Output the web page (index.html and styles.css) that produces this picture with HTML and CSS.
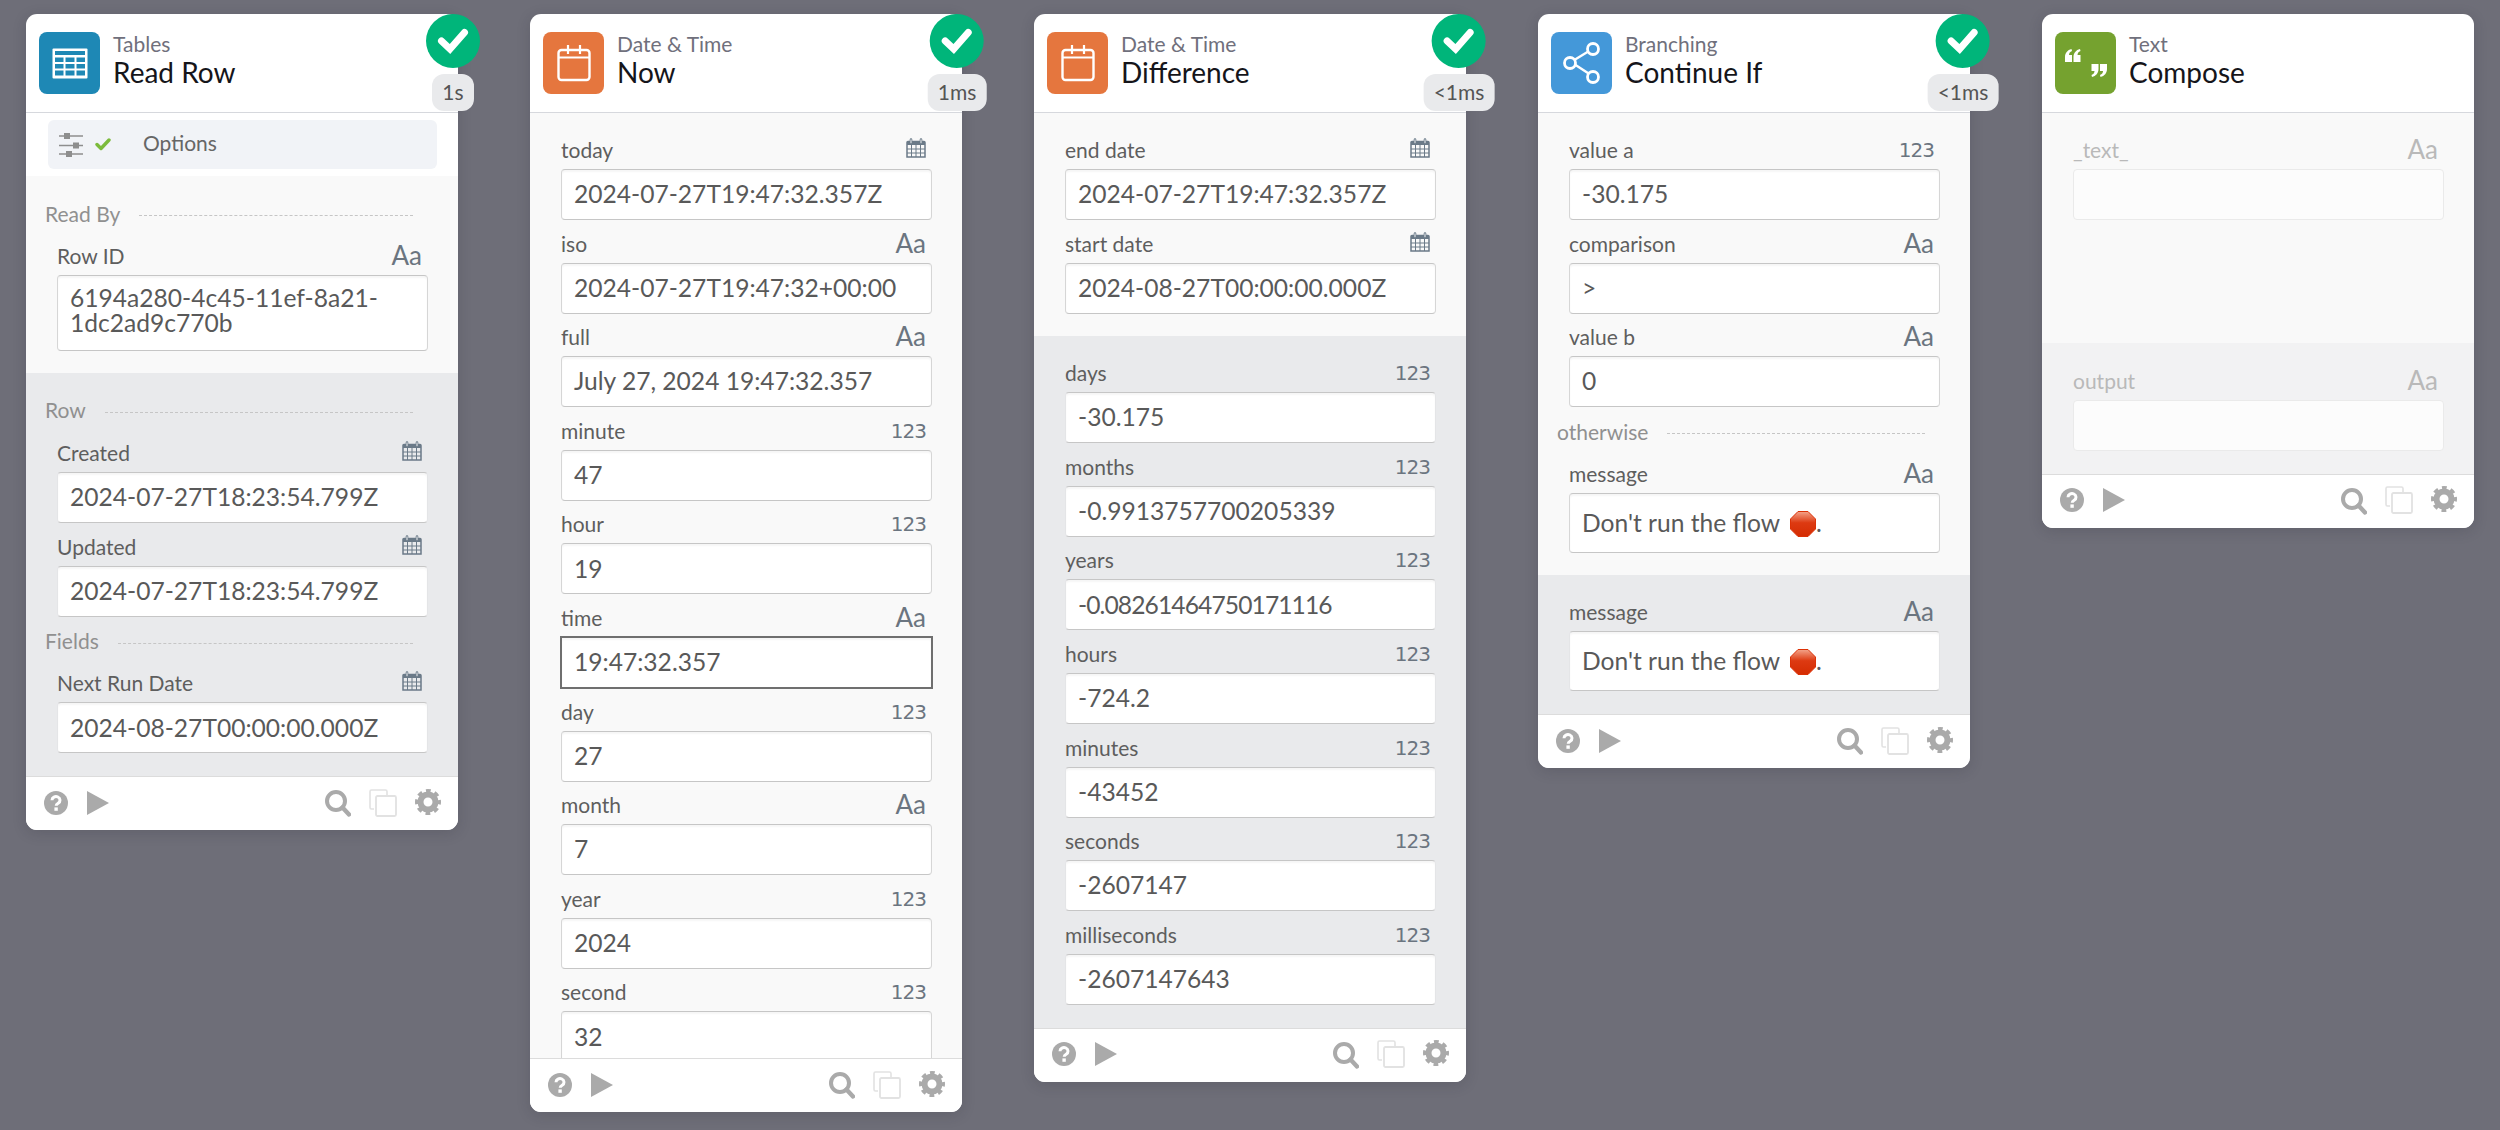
FILE: index.html
```html
<!DOCTYPE html>
<html lang="en">
<head>
<meta charset="utf-8">
<title>Flow run</title>
<link rel="stylesheet" href="styles.css">
</head>
<body>
<svg class="defs" width="0" height="0" aria-hidden="true">
  <symbol id="cal" viewBox="0 0 20 20">
    <path d="M1 4.5a1 1 0 0 1 1-1h16a1 1 0 0 1 1 1V19H1z" fill="none" stroke="currentColor" stroke-width="1.5"/>
    <path d="M1 3.5h18V7H1z" fill="currentColor"/>
    <path d="M5 1.5v4M15 1.5v4" stroke="currentColor" stroke-width="2.6" stroke-linecap="round"/>
    <path d="M5 1.8v3M15 1.8v3" stroke="#fff" stroke-width=".9" stroke-linecap="round"/>
    <path d="M1 11h18M1 15h18M5.5 7v12M10 7v12M14.5 7v12" stroke="currentColor" stroke-width="1"/>
  </symbol>
  <symbol id="help" viewBox="0 0 24 24">
    <circle cx="12" cy="12" r="12" fill="currentColor"/>
    <path d="M8 9.2a4 3.6 0 1 1 6.2 3c-1.3.8-2 1.2-2 2.6" fill="none" stroke="#fff" stroke-width="3"/>
    <rect x="10.4" y="16.4" width="3.4" height="3.4" fill="#fff"/>
  </symbol>
  <symbol id="play" viewBox="0 0 22 24"><path d="M0 0l22 12L0 24z" fill="currentColor"/></symbol>
  <symbol id="search" viewBox="0 0 26 27">
    <circle cx="11" cy="11" r="9" fill="none" stroke="currentColor" stroke-width="4"/>
    <path d="M17.5 17.5l6.5 7" stroke="currentColor" stroke-width="4.4" stroke-linecap="round"/>
  </symbol>
  <symbol id="copy" viewBox="0 0 28 28">
    <path d="M5 20H2.5A1.5 1.5 0 0 1 1 18.500V2.500A1.500 1.500 0 0 1 2.500 1h14A1.500 1.500 0 0 1 18 2.500V6" fill="none" stroke="currentColor" stroke-width="1.6"/>
    <rect x="7" y="7" width="20" height="20" rx="1.500" fill="none" stroke="currentColor" stroke-width="1.800"/>
  </symbol>
  <symbol id="gear" viewBox="0 0 26 26">
    <circle cx="13" cy="13" r="7.500" fill="none" stroke="currentColor" stroke-width="6"/>
    <circle cx="13" cy="13" r="11" fill="none" stroke="currentColor" stroke-width="4" stroke-dasharray="4.640 3.999" stroke-dashoffset="2.320"/>
  </symbol>
  <symbol id="check" viewBox="0 0 54 54">
    <path d="M15.500 27l8.500 8L38.500 18.500" fill="none" stroke="#fff" stroke-width="7" stroke-linecap="round" stroke-linejoin="miter"/>
  </symbol>
  <symbol id="stop" viewBox="0 0 26 26">
    <defs><linearGradient id="stopfill" x1="0" y1="0" x2="0" y2="1"><stop offset="0" stop-color="#f3a48a"/><stop offset=".45" stop-color="#dd3a12"/><stop offset="1" stop-color="#d42c02"/></linearGradient></defs>
    <path d="M8 .5h10L25.500 8v10L18 25.500H8L.5 18V8z" fill="url(#stopfill)" stroke="#dc3106"/>
  </symbol>
</svg>

<main class="board">

  <article class="card">
    <header class="card-head">
      <div class="app-icon app-tables">
        <svg width="36" height="31" viewBox="0 0 36 31"><rect x=".5" y=".5" width="35" height="30" rx="1" fill="#fff"/><g fill="#1e88b5"><rect x="3" y="3" width="30" height="4"/><rect x="3" y="9.500" width="8.500" height="4.500"/><rect x="13.500" y="9.500" width="9" height="4.500"/><rect x="24.500" y="9.500" width="8.500" height="4.500"/><rect x="3" y="16" width="8.500" height="4.500"/><rect x="13.500" y="16" width="9" height="4.500"/><rect x="24.500" y="16" width="8.500" height="4.500"/><rect x="3" y="22.500" width="8.500" height="5"/><rect x="13.500" y="22.500" width="9" height="5"/><rect x="24.500" y="22.500" width="8.500" height="5"/></g></svg>
      </div>
      <div class="head-text"><div class="app-name">Tables</div><div class="step-name">Read Row</div></div>
    </header>
    <div class="status"><span class="status-dot"><svg width="54" height="54"><use href="#check"/></svg></span><span class="status-time">1s</span></div>
    <div class="options-wrap">
      <div class="options">
        <svg class="options-sliders" width="26" height="24" viewBox="0 0 26 24"><g stroke="#8e8e8e" stroke-width="1.600"><path d="M1 3h24M1 12.500h24M1 21h24"/></g><g fill="#8e8e8e"><rect x="6" y="0" width="6" height="6"/><rect x="15" y="9.500" width="6" height="6"/><rect x="8" y="18" width="6" height="6"/></g></svg>
        <svg class="options-check" width="16" height="13" viewBox="0 0 16 13"><path d="M2 6.500l4 4 8-8.500" fill="none" stroke="#7cbb3c" stroke-width="3.400" stroke-linecap="round" stroke-linejoin="round"/></svg>
        <span class="options-label">Options</span>
      </div>
    </div>
    <section class="section section-light section-titled">
      <div class="section-title"><span>Read By</span><i class="rule"></i></div>
      <div class="field"><div class="field-head"><span class="field-label">Row ID</span><span class="type-aa">Aa</span></div><div class="input input-multi">6194a280-4c45-11ef-8a21-<br>1dc2ad9c770b</div></div>
    </section>
    <section class="section section-grey section-titled">
      <div class="section-title title-row"><span>Row</span><i class="rule"></i></div>
      <div class="field"><div class="field-head"><span class="field-label">Created</span><svg class="type-cal"><use href="#cal"/></svg></div><div class="input">2024-07-27T18:23:54.799Z</div></div>
      <div class="field"><div class="field-head"><span class="field-label">Updated</span><svg class="type-cal"><use href="#cal"/></svg></div><div class="input">2024-07-27T18:23:54.799Z</div></div>
      <div class="section-title title-inner"><span>Fields</span><i class="rule"></i></div>
      <div class="field"><div class="field-head"><span class="field-label">Next Run Date</span><svg class="type-cal"><use href="#cal"/></svg></div><div class="input">2024-08-27T00:00:00.000Z</div></div>
    </section>
    <footer class="card-foot">
      <svg class="foot-ico ico-help"><use href="#help"/></svg><svg class="foot-ico ico-play"><use href="#play"/></svg>
      <svg class="foot-ico ico-search"><use href="#search"/></svg><svg class="foot-ico ico-copy"><use href="#copy"/></svg><svg class="foot-ico ico-gear"><use href="#gear"/></svg>
    </footer>
  </article>

  <article class="card">
    <header class="card-head">
      <div class="app-icon app-date">
        <svg width="34" height="38" viewBox="0 0 34 38"><rect x="1.500" y="6" width="31" height="30" rx="3" fill="none" stroke="#fff" stroke-width="2.400"/><path d="M1.500 13.500h31M11 1v9M23 1v9" stroke="#fff" stroke-width="2.200"/></svg>
      </div>
      <div class="head-text"><div class="app-name">Date &amp; Time</div><div class="step-name">Now</div></div>
    </header>
    <div class="status"><span class="status-dot"><svg width="54" height="54"><use href="#check"/></svg></span><span class="status-time">1ms</span></div>
    <section class="section section-light section-scroll">
      <div class="field"><div class="field-head"><span class="field-label">today</span><svg class="type-cal"><use href="#cal"/></svg></div><div class="input">2024-07-27T19:47:32.357Z</div></div>
      <div class="field"><div class="field-head"><span class="field-label">iso</span><span class="type-aa">Aa</span></div><div class="input">2024-07-27T19:47:32+00:00</div></div>
      <div class="field"><div class="field-head"><span class="field-label">full</span><span class="type-aa">Aa</span></div><div class="input">July 27, 2024 19:47:32.357</div></div>
      <div class="field"><div class="field-head"><span class="field-label">minute</span><span class="type-num">123</span></div><div class="input">47</div></div>
      <div class="field"><div class="field-head"><span class="field-label">hour</span><span class="type-num">123</span></div><div class="input">19</div></div>
      <div class="field"><div class="field-head"><span class="field-label">time</span><span class="type-aa">Aa</span></div><div class="input input-focus">19:47:32.357</div></div>
      <div class="field"><div class="field-head"><span class="field-label">day</span><span class="type-num">123</span></div><div class="input">27</div></div>
      <div class="field"><div class="field-head"><span class="field-label">month</span><span class="type-aa">Aa</span></div><div class="input">7</div></div>
      <div class="field"><div class="field-head"><span class="field-label">year</span><span class="type-num">123</span></div><div class="input">2024</div></div>
      <div class="field"><div class="field-head"><span class="field-label">second</span><span class="type-num">123</span></div><div class="input">32</div></div>
    </section>
    <footer class="card-foot">
      <svg class="foot-ico ico-help"><use href="#help"/></svg><svg class="foot-ico ico-play"><use href="#play"/></svg>
      <svg class="foot-ico ico-search"><use href="#search"/></svg><svg class="foot-ico ico-copy"><use href="#copy"/></svg><svg class="foot-ico ico-gear"><use href="#gear"/></svg>
    </footer>
  </article>

  <article class="card">
    <header class="card-head">
      <div class="app-icon app-date">
        <svg width="34" height="38" viewBox="0 0 34 38"><rect x="1.500" y="6" width="31" height="30" rx="3" fill="none" stroke="#fff" stroke-width="2.400"/><path d="M1.500 13.500h31M11 1v9M23 1v9" stroke="#fff" stroke-width="2.200"/></svg>
      </div>
      <div class="head-text"><div class="app-name">Date &amp; Time</div><div class="step-name">Difference</div></div>
    </header>
    <div class="status status-wide"><span class="status-dot"><svg width="54" height="54"><use href="#check"/></svg></span><span class="status-time">&lt;1ms</span></div>
    <section class="section section-light">
      <div class="field"><div class="field-head"><span class="field-label">end date</span><svg class="type-cal"><use href="#cal"/></svg></div><div class="input">2024-07-27T19:47:32.357Z</div></div>
      <div class="field"><div class="field-head"><span class="field-label">start date</span><svg class="type-cal"><use href="#cal"/></svg></div><div class="input">2024-08-27T00:00:00.000Z</div></div>
    </section>
    <section class="section section-grey">
      <div class="field"><div class="field-head"><span class="field-label">days</span><span class="type-num">123</span></div><div class="input">-30.175</div></div>
      <div class="field"><div class="field-head"><span class="field-label">months</span><span class="type-num">123</span></div><div class="input">-0.9913757700205339</div></div>
      <div class="field"><div class="field-head"><span class="field-label">years</span><span class="type-num">123</span></div><div class="input input-ones">-0.08261464750171116</div></div>
      <div class="field"><div class="field-head"><span class="field-label">hours</span><span class="type-num">123</span></div><div class="input">-724.2</div></div>
      <div class="field"><div class="field-head"><span class="field-label">minutes</span><span class="type-num">123</span></div><div class="input">-43452</div></div>
      <div class="field"><div class="field-head"><span class="field-label">seconds</span><span class="type-num">123</span></div><div class="input">-2607147</div></div>
      <div class="field"><div class="field-head"><span class="field-label">milliseconds</span><span class="type-num">123</span></div><div class="input">-2607147643</div></div>
    </section>
    <footer class="card-foot">
      <svg class="foot-ico ico-help"><use href="#help"/></svg><svg class="foot-ico ico-play"><use href="#play"/></svg>
      <svg class="foot-ico ico-search"><use href="#search"/></svg><svg class="foot-ico ico-copy"><use href="#copy"/></svg><svg class="foot-ico ico-gear"><use href="#gear"/></svg>
    </footer>
  </article>

  <article class="card">
    <header class="card-head">
      <div class="app-icon app-branch">
        <svg width="38" height="44" viewBox="0 0 38 44"><path d="M31 7L8 21l23 15" fill="none" stroke="#fff" stroke-width="2.400"/><g fill="#4498d9" stroke="#fff" stroke-width="2.800"><circle cx="30" cy="8" r="5.500"/><circle cx="7" cy="22" r="5.500"/><circle cx="30" cy="36" r="5.500"/></g></svg>
      </div>
      <div class="head-text"><div class="app-name">Branching</div><div class="step-name">Continue If</div></div>
    </header>
    <div class="status status-wide"><span class="status-dot"><svg width="54" height="54"><use href="#check"/></svg></span><span class="status-time">&lt;1ms</span></div>
    <section class="section section-light">
      <div class="field"><div class="field-head"><span class="field-label">value a</span><span class="type-num">123</span></div><div class="input">-30.175</div></div>
      <div class="field"><div class="field-head"><span class="field-label">comparison</span><span class="type-aa">Aa</span></div><div class="input">&gt;</div></div>
      <div class="field"><div class="field-head"><span class="field-label">value b</span><span class="type-aa">Aa</span></div><div class="input">0</div></div>
      <div class="section-title title-inner"><span>otherwise</span><i class="rule"></i></div>
      <div class="field"><div class="field-head"><span class="field-label">message</span><span class="type-aa">Aa</span></div><div class="input input-tall"><span>Don't run the flow <svg class="stop"><use href="#stop"/></svg>.</span></div></div>
    </section>
    <section class="section section-grey">
      <div class="field"><div class="field-head"><span class="field-label">message</span><span class="type-aa">Aa</span></div><div class="input input-tall"><span>Don't run the flow <svg class="stop"><use href="#stop"/></svg>.</span></div></div>
    </section>
    <footer class="card-foot">
      <svg class="foot-ico ico-help"><use href="#help"/></svg><svg class="foot-ico ico-play"><use href="#play"/></svg>
      <svg class="foot-ico ico-search"><use href="#search"/></svg><svg class="foot-ico ico-copy"><use href="#copy"/></svg><svg class="foot-ico ico-gear"><use href="#gear"/></svg>
    </footer>
  </article>

  <article class="card card-idle">
    <header class="card-head">
      <div class="app-icon app-text">
        <svg width="42" height="28" viewBox="0 0 42 28"><g fill="#fff"><path d="M0 13V8C0 4 2.500 1 6.500 0l.5 2C5 2.800 4 4 4 6h3v7zM8.500 13V8c0-4 2.500-7 6.500-8l.5 2c-2 .8-3 2-3 4h3v7z"/><path d="M42 15v5c0 4-2.500 7-6.500 8l-.5-2c2-.8 3-2 3-4h-3v-7zM33.500 15v5c0 4-2.500 7-6.500 8l-.5-2c2-.8 3-2 3-4h-3v-7z"/></g></svg>
      </div>
      <div class="head-text"><div class="app-name">Text</div><div class="step-name">Compose</div></div>
    </header>
    <section class="section section-light section-blank">
      <div class="field"><div class="field-head"><span class="field-label">_text_</span><span class="type-aa">Aa</span></div><div class="input"></div></div>
    </section>
    <section class="section section-grey">
      <div class="field"><div class="field-head"><span class="field-label">output</span><span class="type-aa">Aa</span></div><div class="input"></div></div>
    </section>
    <footer class="card-foot">
      <svg class="foot-ico ico-help"><use href="#help"/></svg><svg class="foot-ico ico-play"><use href="#play"/></svg>
      <svg class="foot-ico ico-search"><use href="#search"/></svg><svg class="foot-ico ico-copy"><use href="#copy"/></svg><svg class="foot-ico ico-gear"><use href="#gear"/></svg>
    </footer>
  </article>

</main>
</body>
</html>
```

FILE: styles.css
```css
* { box-sizing: border-box; }
html, body { margin: 0; height: 100%; }
body {
  background: #6e6e78;
  font-family: "Lato", "Open Sans", sans-serif;
  overflow: hidden;
}
.defs { position: absolute; }
.board {
  display: flex;
  align-items: flex-start;
  gap: 72px;
  padding: 14px 0 0 26px;
}
.card {
  position: relative;
  flex: 0 0 432px;
  display: flex;
  flex-direction: column;
  background: #fff;
  border-radius: 11px;
  box-shadow: 0 3px 14px rgba(40, 40, 50, .18);
}
.card-head {
  display: flex;
  align-items: flex-start;
  height: 99px;
  padding: 18px 13px 0;
  border-bottom: 1px solid #d6d8dd;
}
.app-icon {
  flex: 0 0 61px;
  height: 62px;
  display: flex;
  align-items: center;
  justify-content: center;
  border-radius: 8px;
}
.app-tables { background: #1e88b5; }
.app-date { background: #e5763e; }
.app-branch { background: #4498d9; }
.app-text { background: #75a22f; }
.head-text { padding-left: 13px; }
.app-name { font-size: 21px; line-height: 24px; color: #70707c; }
.step-name { font-size: 28px; line-height: 33px; color: #15151a; }

.status {
  position: absolute;
  top: 0;
  left: 427px;
  transform: translateX(-50%);
  display: flex;
  flex-direction: column;
  align-items: center;
  gap: 6px;
}
.status-wide { left: 425px; }
.status-dot {
  display: block;
  width: 54px;
  height: 54px;
  border-radius: 50%;
  background: #00b57a;
}
.status-dot svg { display: block; }
.status-time {
  display: block;
  padding: 0 10px;
  height: 36.500px;
  line-height: 36px;
  border-radius: 12px;
  background: #e9eaec;
  color: #555;
  font-size: 21px;
  white-space: nowrap;
}

.options-wrap { padding: 7px 21px 7px 22px; }
.options {
  display: flex;
  align-items: center;
  height: 49px;
  padding-left: 10px;
  background: #f1f3f7;
  border-radius: 6px;
}
.options-check { margin-left: 11px; }
.options-label { margin: 0 0 4px 32px; font-size: 21px; color: #666; }

.section { padding: 13.400px 30px 22px 31px; }
.section-light { background: #f9f9f9; }
.section-grey { background: #e9eaec; padding-top: 14px; padding-bottom: 23px; }
.section-titled { padding-top: 23px; }
.section-scroll { height: 945px; overflow: hidden; padding-bottom: 0; }
.section-blank { height: 230px; }

.section-title {
  display: flex;
  align-items: center;
  gap: 19px;
  height: 30px;
  margin: 0 15px 3px -12px;
  font-size: 21px;
  color: #909090;
}
.section-title span { margin-bottom: 2px; }
.title-row { margin-bottom: 4px; }
.title-inner { margin-top: 10px; }
.rule { flex: 1; border-top: 1px dashed #c6c6c6; margin-top: 3px; }

.field-head {
  display: flex;
  justify-content: space-between;
  align-items: flex-end;
  height: 42.600px;
  padding: 0 6px 6px 0;
}
.field-label { font-size: 21px; line-height: 26px; color: #5e5e5e; }
.type-aa { font-size: 26px; line-height: 28px; color: #6b7580; }
.type-num { font-family: "DejaVu Sans", sans-serif; font-size: 20px; line-height: 26px; letter-spacing: -1px; color: #6b7580; }
.type-cal { width: 20px; height: 20px; margin: 0 0 5px; color: #6b7a88; }

.input {
  display: flex;
  align-items: center;
  white-space: pre;
  height: 51px;
  padding: 0 12px 1.500px;
  background: #fff;
  border: 1px solid #d6d6d6;
  border-top-color: #c6c6c6;
  border-bottom-color: #c6c6c6;
  border-radius: 4px;
  box-shadow: inset 0 2px 2px rgba(0, 0, 0, .04);
  font-size: 24.600px;
  color: #595959;
}
.section-grey .input { border-left-color: #e4e5e7; border-right-color: #e4e5e7; }
.input-multi { display: block; height: 76px; padding-top: 9px; line-height: 25.500px; white-space: normal; }
.input-tall { height: 60px; }
.input-ones { letter-spacing: -.9px; }
.input-focus {
  height: 53px;
  margin: -1px;
  padding-left: 12px;
  border: 2px solid #6f6f6f;
  border-radius: 0;
}
.stop { width: 26px; height: 26px; margin-left: 4px; vertical-align: -5px; }

.card-foot {
  display: flex;
  align-items: center;
  height: 54px;
  padding: 0 17px 2px 18px;
  color: #aaa;
  background: #fff;
  border-top: 1px solid #dcdcdc;
  border-radius: 0 0 11px 11px;
}
.foot-ico { display: block; }
.ico-help { width: 24px; height: 24px; }
.ico-play { width: 22px; height: 24px; margin-left: 18.500px; }
.ico-search { width: 26px; height: 27px; margin-left: auto; margin-top: 2px; }
.ico-copy { width: 28px; height: 28px; margin-left: 18px; color: #e2e2e2; }
.ico-gear { width: 26px; height: 26px; margin-left: 18px; margin-top: -2px; }

.card-idle .field-label,
.card-idle .type-aa { color: #b9b9b9; }
.card-idle .input { background: #fcfcfc; border-color: #eaeaea; box-shadow: none; }
.card-idle .section-grey { background: #f2f2f3; }
```
